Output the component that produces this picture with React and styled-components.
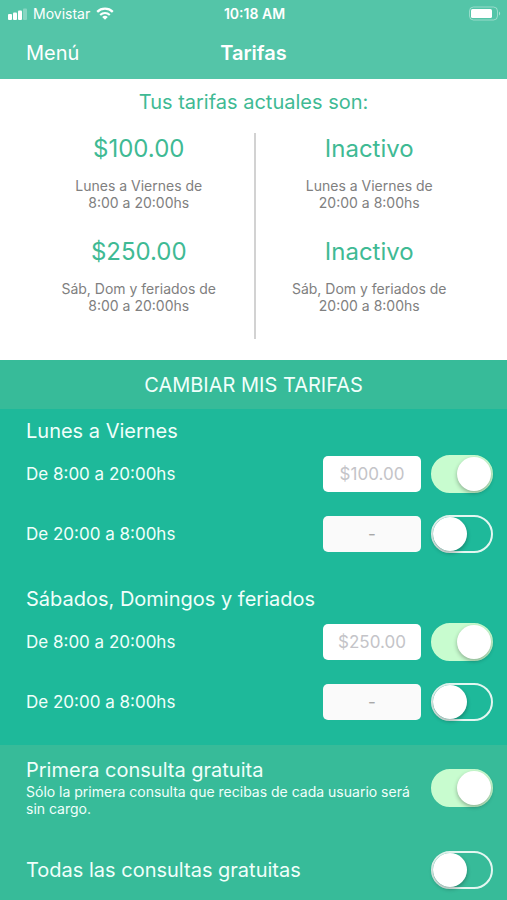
import { useState } from "react";
import styled, { createGlobalStyle } from "styled-components";

const currentRates = [
  { id: 1, price: "$100.00", days: "Lunes a Viernes de", hours: "8:00 a 20:00hs" },
  { id: 2, price: "Inactivo", days: "Lunes a Viernes de", hours: "20:00 a 8:00hs" },
  { id: 3, price: "$250.00", days: "Sáb, Dom y feriados de", hours: "8:00 a 20:00hs" },
  { id: 4, price: "Inactivo", days: "Sáb, Dom y feriados de", hours: "20:00 a 8:00hs" },
];

const groups = [
  {
    title: "Lunes a Viernes",
    rows: [
      { id: "week-day", label: "De 8:00 a 20:00hs", price: "$100.00", active: true },
      { id: "week-night", label: "De 20:00 a 8:00hs", price: "-", active: false },
    ],
  },
  {
    title: "Sábados, Domingos y feriados",
    rows: [
      { id: "weekend-day", label: "De 8:00 a 20:00hs", price: "$250.00", active: true },
      { id: "weekend-night", label: "De 20:00 a 8:00hs", price: "-", active: false },
    ],
  },
];

const RateRow = ({ row }) => {
  const [active, setActive] = useState(row.active);
  const [price, setPrice] = useState("");

  return (
    <Row>
      <RowLabel htmlFor={row.id}>{row.label}</RowLabel>
      <PriceInput
        id={row.id}
        type="text"
        placeholder={row.price}
        value={price}
        disabled={!active}
        onChange={(e) => setPrice(e.target.value)}
      />
      <Switch
        type="checkbox"
        role="switch"
        aria-label={row.label}
        checked={active}
        onChange={() => setActive(!active)}
      />
    </Row>
  );
};

const App = () => {
  const [firstFree, setFirstFree] = useState(true);
  const [allFree, setAllFree] = useState(false);

  return (
    <Page>
      <GlobalStyle />
      <Header>
        <StatusBar>
          <Carrier>
            <svg width="19" height="12" viewBox="0 0 19 12" fill="#fff">
              <rect x="0" y="6" width="4" height="6" rx="1" />
              <rect x="5" y="4.5" width="4" height="7.5" rx="1" />
              <rect x="10" y="2.5" width="4" height="9.5" rx="1" />
              <rect x="15" y="0.5" width="4" height="11.5" rx="1" opacity="0.3" />
            </svg>
            <span>Movistar</span>
            <svg width="18" height="13" viewBox="0 0 18 13" fill="none" stroke="#fff">
              <path d="M1.2 4.8a11.2 11.2 0 0 1 15.6 0" strokeWidth="2.3" />
              <path d="M4.2 7.9a7 7 0 0 1 9.6 0" strokeWidth="2.1" />
              <path d="M9 12.8 6.2 10a4 4 0 0 1 5.6 0z" fill="#fff" stroke="none" />
            </svg>
          </Carrier>
          <Time>10:18 AM</Time>
          <Battery>
            <svg width="32" height="15" viewBox="0 0 32 15">
              <rect x="0.5" y="1" width="28" height="13" rx="4" fill="none" stroke="#fff" opacity="0.4" />
              <rect x="2" y="3" width="21" height="9" rx="1.5" fill="#fff" />
              <path d="M30 5.5a2.4 2.4 0 0 1 0 4z" fill="#fff" opacity="0.5" />
            </svg>
          </Battery>
        </StatusBar>
        <NavBar>
          <MenuButton type="button">Menú</MenuButton>
          <NavTitle>Tarifas</NavTitle>
        </NavBar>
      </Header>

      <Current>
        <CurrentTitle>Tus tarifas actuales son:</CurrentTitle>
        <Rates>
          {currentRates.map((rate) => (
            <Rate key={rate.id}>
              <Price>{rate.price}</Price>
              <Schedule>
                {rate.days}
                <br />
                {rate.hours}
              </Schedule>
            </Rate>
          ))}
        </Rates>
      </Current>

      <Banner>CAMBIAR MIS TARIFAS</Banner>

      <Settings>
        {groups.map((group) => (
          <Group key={group.title}>
            <Heading>{group.title}</Heading>
            {group.rows.map((row) => (
              <RateRow key={row.id} row={row} />
            ))}
          </Group>
        ))}
      </Settings>

      <FreeSection>
        <FreeRow>
          <label htmlFor="first-free">
            <Heading as="span">Primera consulta gratuita</Heading>
            <Hint>Sólo la primera consulta que recibas de cada usuario será sin cargo.</Hint>
          </label>
          <Switch
            id="first-free"
            type="checkbox"
            role="switch"
            checked={firstFree}
            onChange={() => setFirstFree(!firstFree)}
          />
        </FreeRow>
        <FreeRow>
          <label htmlFor="all-free">
            <Heading as="span">Todas las consultas gratuitas</Heading>
          </label>
          <Switch
            id="all-free"
            type="checkbox"
            role="switch"
            checked={allFree}
            onChange={() => setAllFree(!allFree)}
          />
        </FreeRow>
      </FreeSection>
    </Page>
  );
};

const GlobalStyle = createGlobalStyle`
  * {
    box-sizing: border-box;
    margin: 0;
    padding: 0;
  }
  body {
    background: #37bb99;
    font-family: Inter, "Liberation Sans", sans-serif;
  }
  button, input {
    font-family: inherit;
  }
`;

const Page = styled.div`
  min-height: 100vh;
  color: #f0fffb;
`;

const Header = styled.header`
  background: #54c5a8;
  color: white;
`;

const StatusBar = styled.div`
  display: grid;
  grid-template-columns: 1fr auto 1fr;
  align-items: center;
  height: 27px;
  padding: 0 6px 0 8px;
  font-size: 14px;
`;

const Carrier = styled.div`
  display: flex;
  align-items: center;
  gap: 6px;
`;

const Time = styled.span`
  font-weight: 600;
`;

const Battery = styled.div`
  display: flex;
  justify-content: flex-end;
`;

const NavBar = styled.nav`
  display: grid;
  grid-template-columns: 1fr auto 1fr;
  align-items: center;
  height: 52px;
  padding: 0 26px;
`;

const MenuButton = styled.button`
  justify-self: start;
  border: none;
  background: none;
  color: white;
  font-size: 20px;
  cursor: pointer;
`;

const NavTitle = styled.h1`
  font-size: 20px;
  font-weight: 600;
`;

const Current = styled.section`
  padding: 11px 24px 21px;
  background: white;
  color: #3fba94;
  text-align: center;
`;

const CurrentTitle = styled.h2`
  margin-bottom: 18px;
  font-size: 20px;
  font-weight: 400;
  line-height: 25px;
`;

const Rates = styled.div`
  display: grid;
  grid-template-columns: 1fr 1fr;
`;

const Rate = styled.div`
  padding: 1px 0 25px;
  &:nth-child(even) {
    border-left: 2px solid #d2d2d2;
  }
`;

const Price = styled.p`
  margin-bottom: 13px;
  font-size: 24px;
  line-height: 30px;
`;

const Schedule = styled.p`
  color: #808080;
  font-size: 14px;
  line-height: 17px;
`;

const Banner = styled.h2`
  padding-top: 2px;
  font-size: 20px;
  font-weight: 400;
  line-height: 47px;
  text-align: center;
`;

const Settings = styled.section`
  background: #1eb99a;
`;

const Group = styled.div`
  padding: 10px 14px 13px 26px;
`;

const Heading = styled.h3`
  display: block;
  font-size: 20px;
  font-weight: 400;
  line-height: 25px;
`;

const Row = styled.div`
  display: flex;
  align-items: center;
  gap: 10px;
  height: 60px;
`;

const RowLabel = styled.label`
  flex: 1;
  font-size: 17px;
`;

const PriceInput = styled.input`
  width: 98px;
  height: 36px;
  border: none;
  border-radius: 5px;
  background: white;
  color: #555;
  font-size: 17px;
  text-align: center;
  &::placeholder {
    color: #c4c4c8;
  }
  &:disabled {
    background: #fafafa;
  }
  &:disabled::placeholder {
    color: #a8a8a8;
  }
`;

const Switch = styled.input`
  appearance: none;
  flex: none;
  display: flex;
  align-items: center;
  width: 62px;
  height: 38px;
  border: 2px solid #e4f7f1;
  border-radius: 19px;
  cursor: pointer;
  &::before {
    content: "";
    width: 34px;
    height: 34px;
    border-radius: 50%;
    background: white;
    box-shadow: 0 2px 4px rgba(0, 0, 0, 0.3);
  }
  &:checked {
    justify-content: flex-end;
    border-color: #c8fccf;
    background: #c8fccf;
  }
`;

const FreeSection = styled.section`
  display: flex;
  flex-direction: column;
  gap: 34px;
  padding: 13px 14px 10px 26px;
`;

const FreeRow = styled.div`
  display: flex;
  align-items: center;
  justify-content: space-between;
`;

const Hint = styled.span`
  display: block;
  font-size: 14px;
  line-height: 17px;
`;

export default App;
